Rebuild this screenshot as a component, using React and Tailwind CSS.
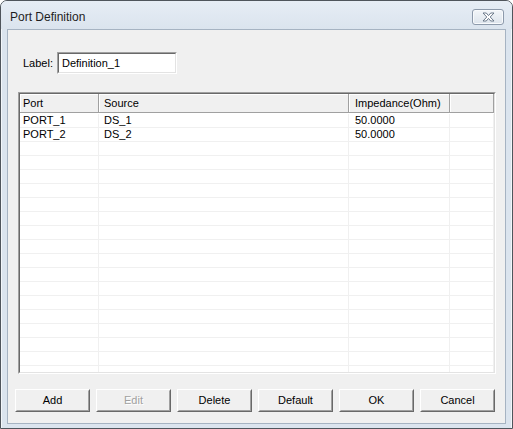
import React from 'react';

const font = { fontFamily: '"Liberation Sans", Arial, sans-serif' };

const rows = [
  { port: 'PORT_1', source: 'DS_1', imp: '50.0000' },
  { port: 'PORT_2', source: 'DS_2', imp: '50.0000' },
];

function CloseButton() {
  return (
    <div className="w-[32px] h-[16px] rounded-[3px] border border-[#8d9aab] bg-gradient-to-b from-[#f3f6f9] to-[#dde4ec] shadow-[inset_0_0_0_1px_#f8fafc] flex items-center justify-center">
      <svg width="13" height="10" viewBox="0 0 13 10">
        <path
          d="M1 1 H4.3 L6.5 3.6 L8.7 1 H12 L8.2 5 L12 9 H8.7 L6.5 6.4 L4.3 9 H1 L4.8 5 Z"
          fill="#ffffff"
          stroke="#5f6d80"
          strokeWidth="0.9"
          strokeLinejoin="round"
        />
      </svg>
    </div>
  );
}

function Button({ children, disabled }) {
  return (
    <div className="w-[75px] h-[23px] border border-t-white border-l-white border-r-[#696969] border-b-[#696969] bg-[#f0f0f0]">
      <div className="h-full border border-t-[#f0f0f0] border-l-[#f0f0f0] border-r-[#a0a0a0] border-b-[#a0a0a0] flex items-center justify-center text-[11px]">
        {disabled ? (
          <span className="text-[#a0a0a0] [text-shadow:1px_1px_0_#ffffff]">{children}</span>
        ) : (
          <span className="text-black">{children}</span>
        )}
      </div>
    </div>
  );
}

function HeaderCell({ children, className }) {
  return (
    <div className={`h-full flex items-center border-r border-r-[#a0a0a0] shadow-[inset_1px_0_0_#ffffff] ${className}`}>
      {children}
    </div>
  );
}

export default function App() {
  const body = [...rows];
  while (body.length < 19) body.push({ port: '', source: '', imp: '' });

  return (
    <div style={font} className="w-[513px] h-[429px] overflow-hidden bg-white">
      <div className="w-[513px] h-[429px] flex flex-col border border-[#4f555c] rounded-t-[7px] bg-[#dbe4ee] shadow-[inset_1px_1px_0_#f2f6fa,inset_-1px_0_0_#f2f6fa] px-[6px] pb-[4px]">
        {/* title bar */}
        <div className="h-[28px] flex items-start justify-between bg-gradient-to-b from-[#e6edf5] to-[#dbe4ee] -mx-[6px] px-[6px] rounded-t-[6px]">
          <span className="mt-[9px] ml-[3px] text-[12px] leading-[15px] text-[#1e1e1e]">Port Definition</span>
          <div className="mt-[8px] mr-[2px]">
            <CloseButton />
          </div>
        </div>

        {/* client area */}
        <div className="flex-1 border border-[#a6b3c2] bg-[#f0f0f0] flex flex-col">
          <div className="mt-[22px] ml-[15px] flex items-center gap-[4px] text-[11px]">
            <span>Label:</span>
            <div className="w-[120px] h-[22px] border border-t-[#a0a0a0] border-l-[#a0a0a0] border-r-white border-b-white">
              <div className="h-full bg-white border border-t-[#696969] border-l-[#696969] border-r-[#e3e3e3] border-b-[#e3e3e3] flex items-center pl-[3px]">
                Definition_1
              </div>
            </div>
          </div>

          {/* list */}
          <div className="mt-[18px] ml-[10px] w-[478px] h-[282px] border border-t-[#a0a0a0] border-l-[#a0a0a0] border-r-white border-b-white">
            <div className="h-full bg-white border border-t-[#696969] border-l-[#696969] border-r-[#e3e3e3] border-b-[#e3e3e3] flex flex-col overflow-hidden text-[11px]">
              <div className="h-[19px] shrink-0 flex bg-[#f0f0f0] border-b border-b-[#a0a0a0] shadow-[inset_0_1px_0_#ffffff]">
                <HeaderCell className="w-[79px] pl-[3px]">Port</HeaderCell>
                <HeaderCell className="w-[250px] pl-[5px]">Source</HeaderCell>
                <HeaderCell className="w-[101px] pl-[6px]">Impedance(Ohm)</HeaderCell>
                <HeaderCell className="flex-1" />
              </div>
              <div className="h-[1px] shrink-0 bg-white" />
              {body.map((r, i) => (
                <div key={i} className="h-[14px] shrink-0 flex border-b border-b-[#f0f0f0]">
                  <div className="w-[79px] h-full flex items-center pl-[3px] border-r border-r-[#f0f0f0]">{r.port}</div>
                  <div className="w-[250px] h-full flex items-center pl-[5px] border-r border-r-[#f0f0f0]">{r.source}</div>
                  <div className="w-[101px] h-full flex items-center pl-[6px] border-r border-r-[#f0f0f0]">{r.imp}</div>
                  <div className="flex-1 h-full border-r border-r-[#f0f0f0]" />
                </div>
              ))}
            </div>
          </div>

          {/* buttons */}
          <div className="mt-[15px] ml-[7px] w-[480px] flex justify-between">
            <Button>Add</Button>
            <Button disabled>Edit</Button>
            <Button>Delete</Button>
            <Button>Default</Button>
            <Button>OK</Button>
            <Button>Cancel</Button>
          </div>
        </div>
      </div>
    </div>
  );
}
